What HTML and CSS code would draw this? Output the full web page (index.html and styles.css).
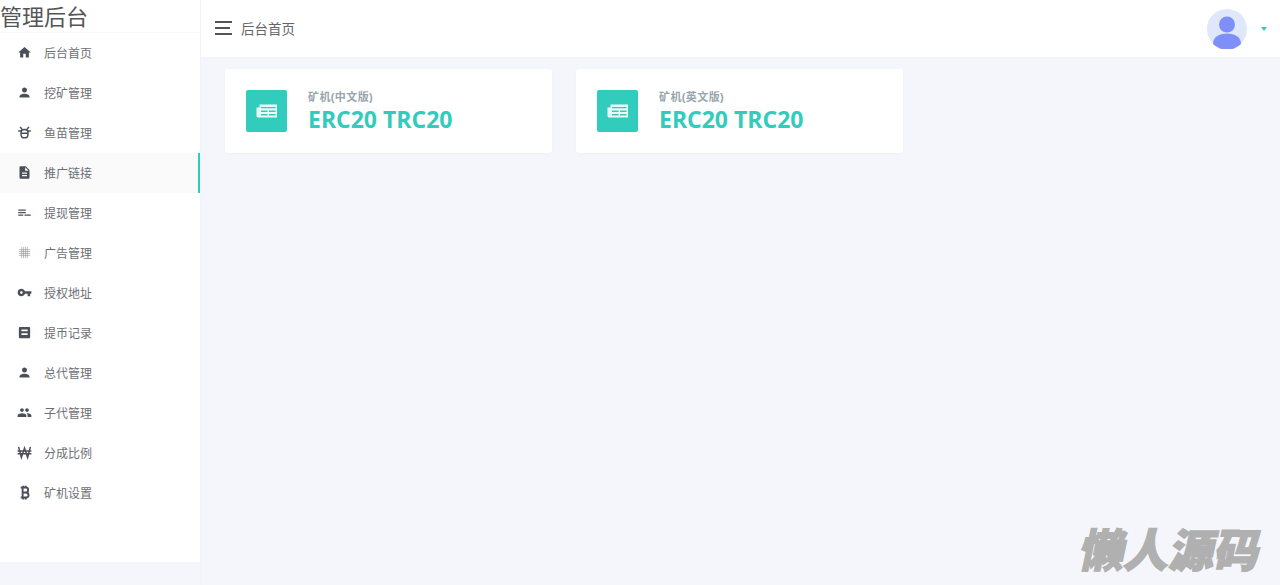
FILE: index.html
```html
<!DOCTYPE html>
<html lang="zh-CN">
<head>
    <meta charset="UTF-8">
    <meta name="viewport" content="width=device-width, initial-scale=1.0">
    <title>管理后台</title>
    <link rel="stylesheet" href="styles.css">
</head>
<body>

<div class="layout">
    <aside class="sidebar">
        <div class="logo">管理后台</div>
        <ul class="menu">
            <li class="menu-item">
                <svg class="menu-icon" viewBox="0 0 24 24"><path d="M10 20v-6h4v6h5v-8h3L12 3 2 12h3v8z"/></svg>
                <span>后台首页</span>
            </li>
            <li class="menu-item">
                <svg class="menu-icon" viewBox="0 0 24 24"><path d="M12 12c2.210 0 4-1.790 4-4s-1.790-4-4-4-4 1.790-4 4 1.790 4 4 4zm0 2c-2.670 0-8 1.340-8 4v2h16v-2c0-2.660-5.330-4-8-4z"/></svg>
                <span>挖矿管理</span>
            </li>
            <li class="menu-item">
                <svg class="menu-icon line-icon" viewBox="0 0 24 24"><path d="M5 3l3.500 4.500M19 3l-3.500 4.500M6.500 11c0-2.500 2-4 5.500-4s5.500 1.500 5.500 4v4c0 3.500-2.500 5.500-5.500 5.500S6.500 18.500 6.500 15zM6.500 13h11M2 9.500h4.500M17.500 9.500H22"/></svg>
                <span>鱼苗管理</span>
            </li>
            <li class="menu-item active">
                <svg class="menu-icon" viewBox="0 0 24 24"><path d="M14 2H6c-1.100 0-1.990.9-1.990 2L4 20c0 1.100.89 2 1.990 2H18c1.100 0 2-.9 2-2V8l-6-6zm2 16H8v-2h8v2zm0-4H8v-2h8v2zm-3-5V3.500L18.500 9H13z"/></svg>
                <span>推广链接</span>
            </li>
            <li class="menu-item">
                <svg class="menu-icon" viewBox="0 0 24 24"><path d="M2 7h12v2H2zM2 11h12v2H2zM2 15h8v2H2zM12 15h10v2H12z"/></svg>
                <span>提现管理</span>
            </li>
            <li class="menu-item">
                <svg class="menu-icon grid-icon" viewBox="0 0 24 24"><path d="M3 7.500h18M3 10.500h18M3 13.500h18M3 16.500h18M7.500 3v18M10.500 3v18M13.500 3v18M16.500 3v18"/></svg>
                <span>广告管理</span>
            </li>
            <li class="menu-item">
                <svg class="menu-icon" viewBox="0 0 24 24"><path d="M12.650 10C11.830 7.670 9.610 6 7 6c-3.310 0-6 2.690-6 6s2.690 6 6 6c2.610 0 4.830-1.670 5.650-4H17v4h4v-4h2v-4H12.650zM7 14c-1.100 0-2-.9-2-2s.9-2 2-2 2 .9 2 2-.9 2-2 2z"/></svg>
                <span>授权地址</span>
            </li>
            <li class="menu-item">
                <svg class="menu-icon" viewBox="0 0 24 24"><path d="M19 3H5c-1.100 0-2 .9-2 2v14c0 1.100.9 2 2 2h14c1.100 0 2-.9 2-2V5c0-1.100-.9-2-2-2zM7 7h10v3H7zm0 6h10v3H7z" fill-rule="evenodd"/></svg>
                <span>提币记录</span>
            </li>
            <li class="menu-item">
                <svg class="menu-icon" viewBox="0 0 24 24"><path d="M12 12c2.210 0 4-1.790 4-4s-1.790-4-4-4-4 1.790-4 4 1.790 4 4 4zm0 2c-2.670 0-8 1.340-8 4v2h16v-2c0-2.660-5.330-4-8-4z"/></svg>
                <span>总代管理</span>
            </li>
            <li class="menu-item">
                <svg class="menu-icon" viewBox="0 0 24 24"><path d="M16 11c1.660 0 2.990-1.340 2.990-3S17.660 5 16 5c-1.660 0-3 1.340-3 3s1.340 3 3 3zm-8 0c1.660 0 2.990-1.340 2.990-3S9.660 5 8 5C6.340 5 5 6.340 5 8s1.340 3 3 3zm0 2c-2.330 0-7 1.170-7 3.500V19h14v-2.500c0-2.330-4.670-3.500-7-3.500zm8 0c-.29 0-.62.02-.97.05 1.160.84 1.970 1.970 1.970 3.450V19h6v-2.500c0-2.330-4.670-3.500-7-3.500z"/></svg>
                <span>子代管理</span>
            </li>
            <li class="menu-item">
                <svg class="menu-icon line-icon" viewBox="0 0 24 24"><path d="M2.500 3l4.500 17L12 5l5 15 4.500-17M1 9.500h22M1 14h22"/></svg>
                <span>分成比例</span>
            </li>
            <li class="menu-item">
                <svg class="menu-icon line-icon bold" viewBox="0 0 24 24"><path d="M6 4h8c2.500 0 3.800 1.400 3.800 3.800S16.500 12 14 12H9m5 0c2.800 0 4.500 1.400 4.500 4S16.800 20 14 20H6M9 4v16M10 1v3M14 1v3M10 20v3M14 20v3"/></svg>
                <span>矿机设置</span>
            </li>
        </ul>
    </aside>

    <div class="content">
        <header class="topbar">
            <div class="crumb">
                <span class="burger"><i></i><i class="short"></i><i></i></span>
                <span class="crumb-text">后台首页</span>
            </div>
            <div class="user">
                <svg class="avatar" viewBox="0 0 40 40">
                    <circle cx="20" cy="20" r="20" fill="#dfe7fb"/>
                    <circle cx="20" cy="15.500" r="8" fill="#7f8ffa"/>
                    <path d="M6 35c0-7 6-10.500 14-10.500S34 28 34 35a20 20 0 0 1-28 0z" fill="#7f8ffa"/>
                </svg>
                <span class="caret"></span>
            </div>
        </header>

        <main class="cards">
            <div class="card">
                <div class="card-icon">
                    <svg viewBox="0 0 24 24"><path d="M4.500 5.500h17.500v13H3a1.500 1.500 0 0 1-1.500-1.500V8.500h3zM6 8v1.300h14.500V8zm0 3.500V13h6.500v-1.500zm8 0V13h6.500v-1.500zM6 15v1.500h6.500V15zm8 0v1.500h6.500V15z" fill-rule="evenodd"/></svg>
                </div>
                <div class="card-body">
                    <div class="card-label">矿机(中文版)</div>
                    <div class="card-value">ERC20 TRC20</div>
                </div>
            </div>
            <div class="card">
                <div class="card-icon">
                    <svg viewBox="0 0 24 24"><path d="M4.500 5.500h17.500v13H3a1.500 1.500 0 0 1-1.500-1.500V8.500h3zM6 8v1.300h14.500V8zm0 3.500V13h6.500v-1.500zm8 0V13h6.500v-1.500zM6 15v1.500h6.500V15zm8 0v1.500h6.500V15z" fill-rule="evenodd"/></svg>
                </div>
                <div class="card-body">
                    <div class="card-label">矿机(英文版)</div>
                    <div class="card-value">ERC20 TRC20</div>
                </div>
            </div>
        </main>
    </div>
</div>

<div class="watermark">懒人源码</div>

</body>
</html>
```

FILE: styles.css
```css
* {
    box-sizing: border-box;
}
body {
    margin: 0;
    height: 585px;
    overflow: hidden;
    font-family: "Liberation Sans", "Noto Sans CJK SC", sans-serif;
    background-color: #f5f6fb;
    color: #666;
}
.layout {
    display: flex;
    align-items: flex-start;
    height: 100%;
}
.sidebar {
    width: 200px;
    height: 562px;
    flex-shrink: 0;
    background-color: #fff;
}
.logo {
    height: 33px;
    font-size: 22px;
    line-height: 35px;
    color: #555;
    border-bottom: 1px solid #f8f8f8;
}
.menu {
    list-style: none;
    margin: 0;
    padding: 0;
}
.menu-item {
    display: flex;
    align-items: center;
    gap: 12px;
    height: 40px;
    padding: 0 0 2px 17px;
    font-size: 12px;
    color: #6c7075;
}
.menu-item.active {
    background-color: #fafafa;
    border-right: 2px solid #32ccbc;
}
.menu-icon {
    width: 15px;
    height: 15px;
    fill: #4b5058;
}
.grid-icon {
    fill: none;
    stroke: #4b5058;
    stroke-width: 1;
    opacity: 0.6;
}
.line-icon {
    fill: none;
    stroke: #4b5058;
    stroke-width: 2.400;
}
.line-icon.bold {
    stroke-width: 3;
}
.content {
    flex: 1;
    margin-left: 1px;
    height: 100%;
    box-shadow: -1px 0 2px rgba(0, 0, 0, 0.02);
}
.topbar {
    display: flex;
    align-items: center;
    justify-content: space-between;
    height: 57px;
    padding: 0 13.500px 0 14px;
    background-color: #fff;
    box-shadow: 0 1px 2px rgba(0, 0, 0, 0.02);
}
.crumb {
    display: flex;
    align-items: center;
    gap: 9.500px;
    padding-bottom: 2px;
}
.burger {
    display: flex;
    flex-direction: column;
    gap: 4px;
    width: 16.500px;
}
.burger i {
    display: block;
    height: 2px;
    background-color: #555;
}
.burger .short {
    width: 14.500px;
}
.crumb-text {
    font-size: 13.500px;
    color: #666;
}
.user {
    display: flex;
    align-items: center;
    gap: 13.500px;
}
.avatar {
    width: 40px;
    height: 40px;
}
.caret {
    width: 0;
    height: 0;
    border-left: 3.500px solid transparent;
    border-right: 3.500px solid transparent;
    border-top: 4px solid #32ccbc;
}
.cards {
    display: flex;
    gap: 24px;
    padding: 12px 24px;
}
.card {
    display: flex;
    align-items: center;
    gap: 21px;
    width: 327px;
    height: 84px;
    padding: 0 21px;
    background-color: #fff;
    border-radius: 3px;
    box-shadow: 0 1px 3px rgba(0, 0, 0, 0.03);
}
.card-icon {
    display: flex;
    align-items: center;
    justify-content: center;
    width: 41px;
    height: 42px;
    background-color: #32ccbc;
    border-radius: 2px;
}
.card-icon svg {
    width: 24px;
    height: 24px;
    fill: #fff;
    opacity: 0.9;
}
.card-body {
    padding-top: 1px;
}
.card-label {
    font-size: 11px;
    font-weight: bold;
    line-height: 14px;
    letter-spacing: 0.400px;
    color: #98a6ad;
}
.card-value {
    margin-top: 1px;
    font-family: "Open Sans", sans-serif;
    font-size: 23px;
    font-weight: bold;
    line-height: 28px;
    color: #32ccbc;
}
.watermark {
    position: absolute;
    left: 1081px;
    top: 521px;
    font-size: 45px;
    font-weight: 900;
    line-height: 62px;
    color: #b0b0b0;
    transform: skewX(-12deg);
    -webkit-text-stroke: 1.500px #b0b0b0;
    text-shadow: 0 0 3px #fff;
}
```
